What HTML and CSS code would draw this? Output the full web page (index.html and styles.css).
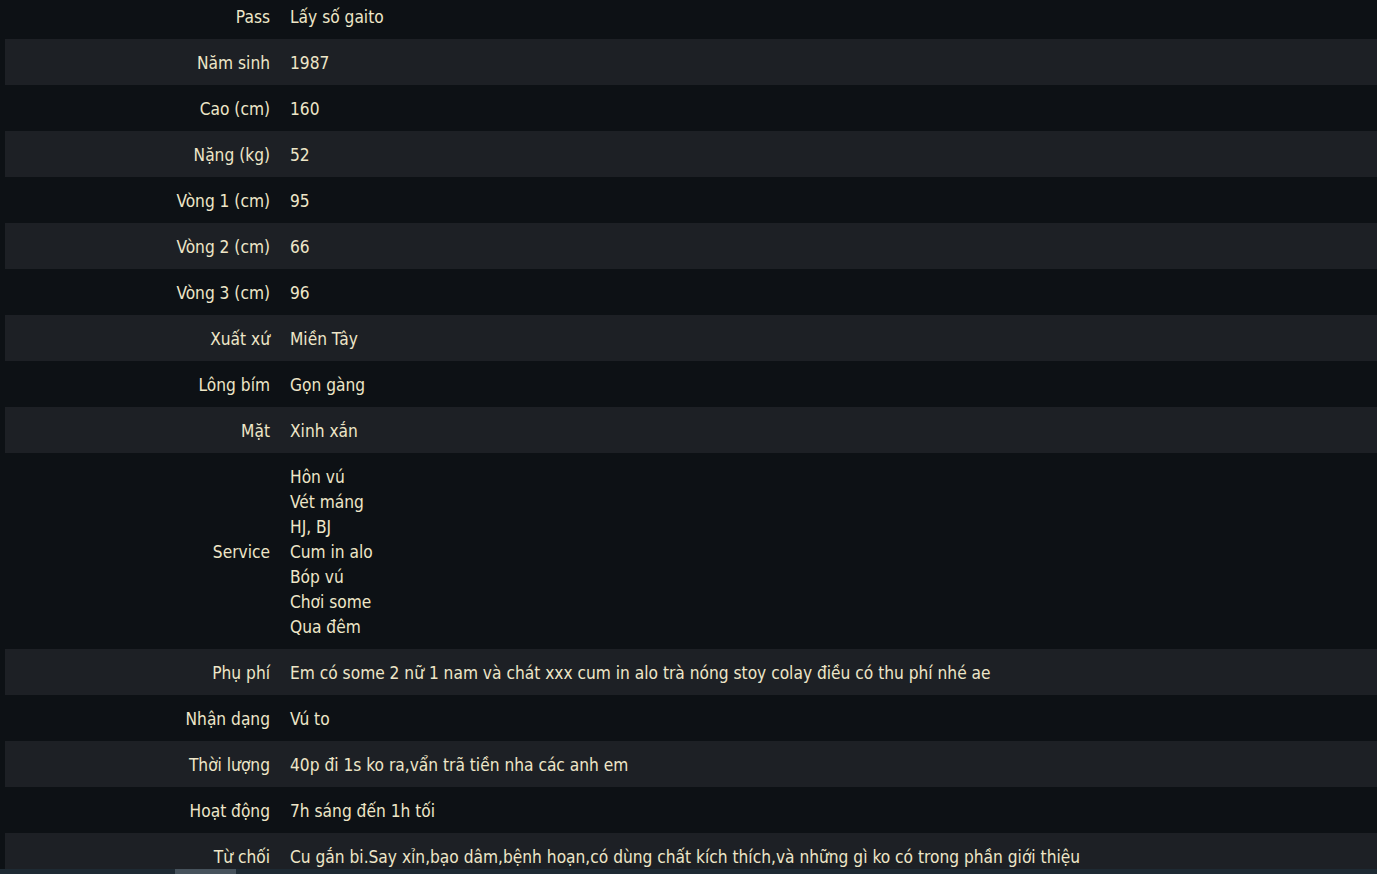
FILE: index.html
```html
<!DOCTYPE html>
<html lang="vi">
<head>
<meta charset="utf-8">
<link rel="stylesheet" href="styles.css">
</head>
<body>
<div class="page">
  <table class="info">
    <tbody>
      <tr><th>Pass</th><td>Lấy số gaito</td></tr>
      <tr><th>Năm sinh</th><td>1987</td></tr>
      <tr><th>Cao (cm)</th><td>160</td></tr>
      <tr><th>Nặng (kg)</th><td>52</td></tr>
      <tr><th>Vòng 1 (cm)</th><td>95</td></tr>
      <tr><th>Vòng 2 (cm)</th><td>66</td></tr>
      <tr><th>Vòng 3 (cm)</th><td>96</td></tr>
      <tr><th>Xuất xứ</th><td>Miền Tây</td></tr>
      <tr><th>Lông bím</th><td>Gọn gàng</td></tr>
      <tr><th>Mặt</th><td>Xinh xắn</td></tr>
      <tr><th>Service</th><td>Hôn vú<br>Vét máng<br>HJ, BJ<br>Cum in alo<br>Bóp vú<br>Chơi some<br>Qua đêm</td></tr>
      <tr><th>Phụ phí</th><td>Em có some 2 nữ 1 nam và chát xxx cum in alo trà nóng stoy colay điều có thu phí nhé ae</td></tr>
      <tr><th>Nhận dạng</th><td>Vú to</td></tr>
      <tr><th>Thời lượng</th><td>40p đi 1s ko ra,vẩn trã tiền nha các anh em</td></tr>
      <tr><th>Hoạt động</th><td>7h sáng đến 1h tối</td></tr>
      <tr><th>Từ chối</th><td>Cu gắn bi.Say xỉn,bạo dâm,bệnh hoạn,có dùng chất kích thích,và những gì ko có trong phần giới thiệu</td></tr>
    </tbody>
  </table>
</div>
<div class="hscroll"><div class="thumb"></div></div>
</body>
</html>
```
FILE: styles.css
```css
html, body {
  margin: 0;
  padding: 0;
  background: #0d1115;
  height: 100%;
  overflow: hidden;
}
body {
  font-family: "DejaVu Sans Condensed", "DejaVu Sans", sans-serif;
  font-size: 17.2px;
  color: #eee6c8;
}
.page {
  padding-left: 5px;
  margin-top: -7px;
}
.info {
  width: 100%;
  border-collapse: collapse;
}
.info tr:nth-child(even) {
  background: #1d2025;
}
.info th,
.info td {
  padding: 11.5px 10px 9.5px;
  height: 25px;
  line-height: 25px;
  vertical-align: middle;
  font-weight: normal;
}
.info th {
  width: 255px;
  text-align: right;
  white-space: nowrap;
}
.info td {
  text-align: left;
}
.hscroll {
  position: fixed;
  left: 0;
  right: 0;
  bottom: 0;
  height: 5px;
  background: #1e2a33;
}
.thumb {
  position: absolute;
  left: 175px;
  width: 61px;
  top: 0;
  bottom: 0;
  background: #46525c;
}
```
